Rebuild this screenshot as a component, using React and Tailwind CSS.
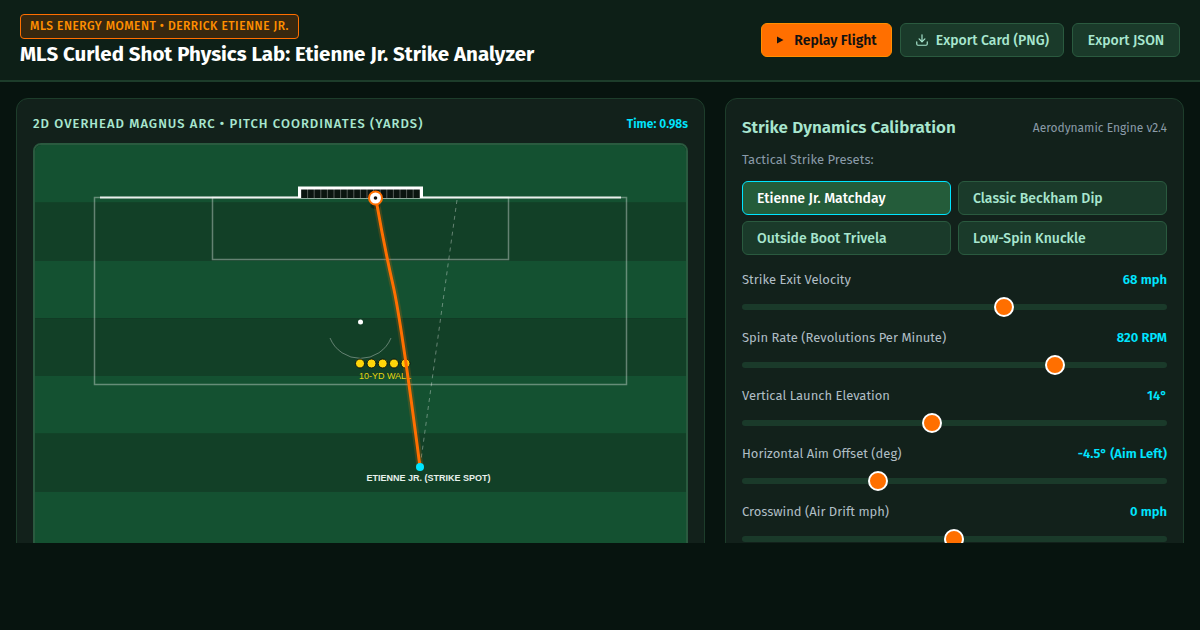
import React from 'react'
import { Download } from 'lucide-react'

const presets = [
  { name: 'Etienne Jr. Matchday', active: true },
  { name: 'Classic Beckham Dip' },
  { name: 'Outside Boot Trivela' },
  { name: 'Low-Spin Knuckle' },
]

const sliders = [
  { label: 'Strike Exit Velocity', value: '68 mph', x: 262 },
  { label: 'Spin Rate (Revolutions Per Minute)', value: '820 RPM', x: 313 },
  { label: 'Vertical Launch Elevation', value: '14°', x: 190 },
  { label: 'Horizontal Aim Offset (deg)', value: '-4.5° (Aim Left)', x: 136 },
  { label: 'Crosswind (Air Drift mph)', value: '0 mph', x: 212 },
]

const stripes = [0, 1, 2, 3, 4, 5, 6, 7]
const wall = [325, 336.5, 347.7, 359, 370.5]
const netBars = Array.from({ length: 19 }, (_, i) => i)

// page coords minus the pitch origin (35, 145)
function PitchSvg() {
  return (
    <svg width="651" height="462" viewBox="0 0 651 462" className="block">
      {stripes.map((i) => (
        <rect key={i} x="0" y={i * 57.75} width="651" height="57.75" fill={i % 2 ? '#124027' : '#145131'} />
      ))}
      <rect x="59.5" y="52.5" width="532" height="187" fill="none" stroke="#fff" strokeOpacity="0.35" strokeWidth="1.5" />
      <rect x="177.5" y="52.5" width="296" height="62" fill="none" stroke="#fff" strokeOpacity="0.35" strokeWidth="1.5" />
      <line x1="65" y1="52.5" x2="586" y2="52.5" stroke="#fff" strokeOpacity="0.85" strokeWidth="2" />
      <rect x="265" y="43" width="121" height="10" fill="#0b1510" />
      {netBars.map((i) => (
        <line key={i} x1={266 + i * 6.6} y1="44" x2={266 + i * 6.6} y2="53" stroke="#fff" strokeOpacity="0.3" strokeWidth="1" />
      ))}
      <path d="M264.5 53 V43 H386.5 V53" fill="none" stroke="#fff" strokeWidth="3" />
      <path d="M295 193 A 33 33 0 0 0 356 193" fill="none" stroke="#fff" strokeOpacity="0.35" strokeWidth="1" />
      <circle cx="325.5" cy="177" r="2.5" fill="#fff" />
      <path d="M422 55 L385 322" fill="none" stroke="#fff" strokeOpacity="0.35" strokeWidth="1" strokeDasharray="4 4" />
      {wall.map((x) => (
        <circle key={x} cx={x} cy="218.5" r="4.5" fill="#ffd60a" stroke="#0b1510" strokeWidth="1" />
      ))}
      <text x="350" y="233.5" textAnchor="middle" fontSize="9" fill="#e6d50f" fontFamily="Liberation Sans, sans-serif">10-YD WALL</text>
      <ellipse cx="340.5" cy="61" rx="5" ry="3" fill="#000" fillOpacity="0.35" />
      <path d="M342 60 Q350 105 358 140 T385 322" fill="none" stroke="#ff6f00" strokeOpacity="0.18" strokeWidth="7" strokeLinecap="round" />
      <path d="M342 60 Q350 105 358 140 T385 322" fill="none" stroke="#ff6f00" strokeWidth="3" strokeLinecap="round" />
      <circle cx="340.5" cy="53" r="6.5" fill="#fff" stroke="#ff6f00" strokeWidth="2" />
      <circle cx="340.5" cy="53" r="1.8" fill="#111" />
      <circle cx="385" cy="322" r="4" fill="#00e5ff" />
      <text x="393.5" y="335.5" textAnchor="middle" fontSize="9" fontWeight="700" fill="#e8f0ec" fontFamily="Liberation Sans, sans-serif">ETIENNE JR. (STRIKE SPOT)</text>
    </svg>
  )
}

function Slider({ label, value, x }) {
  return (
    <div className="h-[58px] shrink-0">
      <div className="flex justify-between items-center h-[18px] text-[13px]">
        <span className="text-[#b0bec5]">{label}</span>
        <span className="font-semibold text-[#00e5ff]">{value}</span>
      </div>
      <div className="relative h-[6px] mt-[15px] rounded-full bg-[#1a3a2a]">
        <div
          className="absolute top-[-5px] w-4 h-4 rounded-full bg-[#ff6f00] border-2 border-white box-content -ml-[10px] -mt-[2px]"
          style={{ left: x }}
        />
      </div>
    </div>
  )
}

export default function App() {
  return (
    <div className="h-[630px] w-[1200px] overflow-hidden bg-[#07140f] font-['Fira_Sans','Noto_Sans',sans-serif]">
      <div className="h-[543px] overflow-hidden">
        <header className="h-[82px] flex items-center justify-between px-5 bg-[#0d1f17] border-b-2 border-[#1d3d2b]">
          <div>
            <div className="inline-block h-[25px] px-[9px] rounded-[4px] border border-[#ff6f00] bg-[#37280f] text-[#ff8f00] text-[12px] font-medium tracking-[0.5px] leading-[23px]">
              MLS ENERGY MOMENT • DERRICK ETIENNE JR.
            </div>
            <h1 className="mt-[1px] text-[20.5px] leading-[28px] font-bold text-white">
              MLS Curled Shot Physics Lab: Etienne Jr. Strike Analyzer
            </h1>
          </div>
          <div className="flex gap-2">
            <button className="h-[34px] w-[131px] flex items-center justify-center gap-[10px] rounded-md bg-[#ff6f00] border border-[#ff8f00] text-[14px] font-semibold text-[#111]">
              <svg width="8" height="8" viewBox="0 0 8 8"><path d="M1 0.5 L7.5 4 L1 7.5 Z" fill="#111" /></svg>
              Replay Flight
            </button>
            <button className="h-[34px] w-[164px] flex items-center justify-center gap-[7px] rounded-md bg-[#1a3a2a] border border-[#2a5a3f] text-[14px] font-medium text-[#a8e6cf]">
              <Download size={14} strokeWidth={2} />
              Export Card (PNG)
            </button>
            <button className="h-[34px] w-[108px] flex items-center justify-center rounded-md bg-[#1a3a2a] border border-[#2a5a3f] text-[14px] font-medium text-[#a8e6cf]">
              Export JSON
            </button>
          </div>
        </header>

        <main className="grid grid-cols-[689px_459px] gap-5 px-4 pt-4">
          <section className="h-[600px] rounded-xl border border-[#1d3d2b] bg-[#12211b] p-4">
            <div className="flex justify-between items-center h-[18px] mb-[10px]">
              <h2 className="text-[13px] font-medium tracking-[1px] text-[#a8e6cf]">
                2D OVERHEAD MAGNUS ARC • PITCH COORDINATES (YARDS)
              </h2>
              <span className="text-[12px] font-semibold text-[#00e5ff]">Time: 0.98s</span>
            </div>
            <div className="rounded-lg overflow-hidden border-2 border-[#2a5a3f] w-[655px]">
              <PitchSvg />
            </div>
          </section>

          <section className="h-[600px] rounded-xl border border-[#1d3d2b] bg-[#12211b] p-4">
            <div className="flex justify-between items-center h-[24px] mt-[1px]">
              <h2 className="text-[17px] font-semibold text-[#a8e6cf]">Strike Dynamics Calibration</h2>
              <span className="text-[12px] text-[#8a9ba8]">Aerodynamic Engine v2.4</span>
            </div>
            <p className="mt-[11px] h-[18px] text-[13px] leading-[18px] text-[#8a9ba8]">Tactical Strike Presets:</p>
            <div className="mt-[12px] grid grid-cols-2 gap-x-[7px] gap-y-[6px]">
              {presets.map((p) => (
                <button
                  key={p.name}
                  className={`h-[34px] text-left pl-[14px] rounded-md border text-[14px] font-medium ${
                    p.active
                      ? 'bg-[#245c3a] border-[#00e5ff] text-white'
                      : 'bg-[#1a3a2a] border-[#2a5a3f] text-[#a8e6cf]'
                  }`}
                >
                  {p.name}
                </button>
              ))}
            </div>
            <div className="mt-[16px]">
              {sliders.map((s) => (
                <Slider key={s.label} {...s} />
              ))}
            </div>
          </section>
        </main>
      </div>
    </div>
  )
}
